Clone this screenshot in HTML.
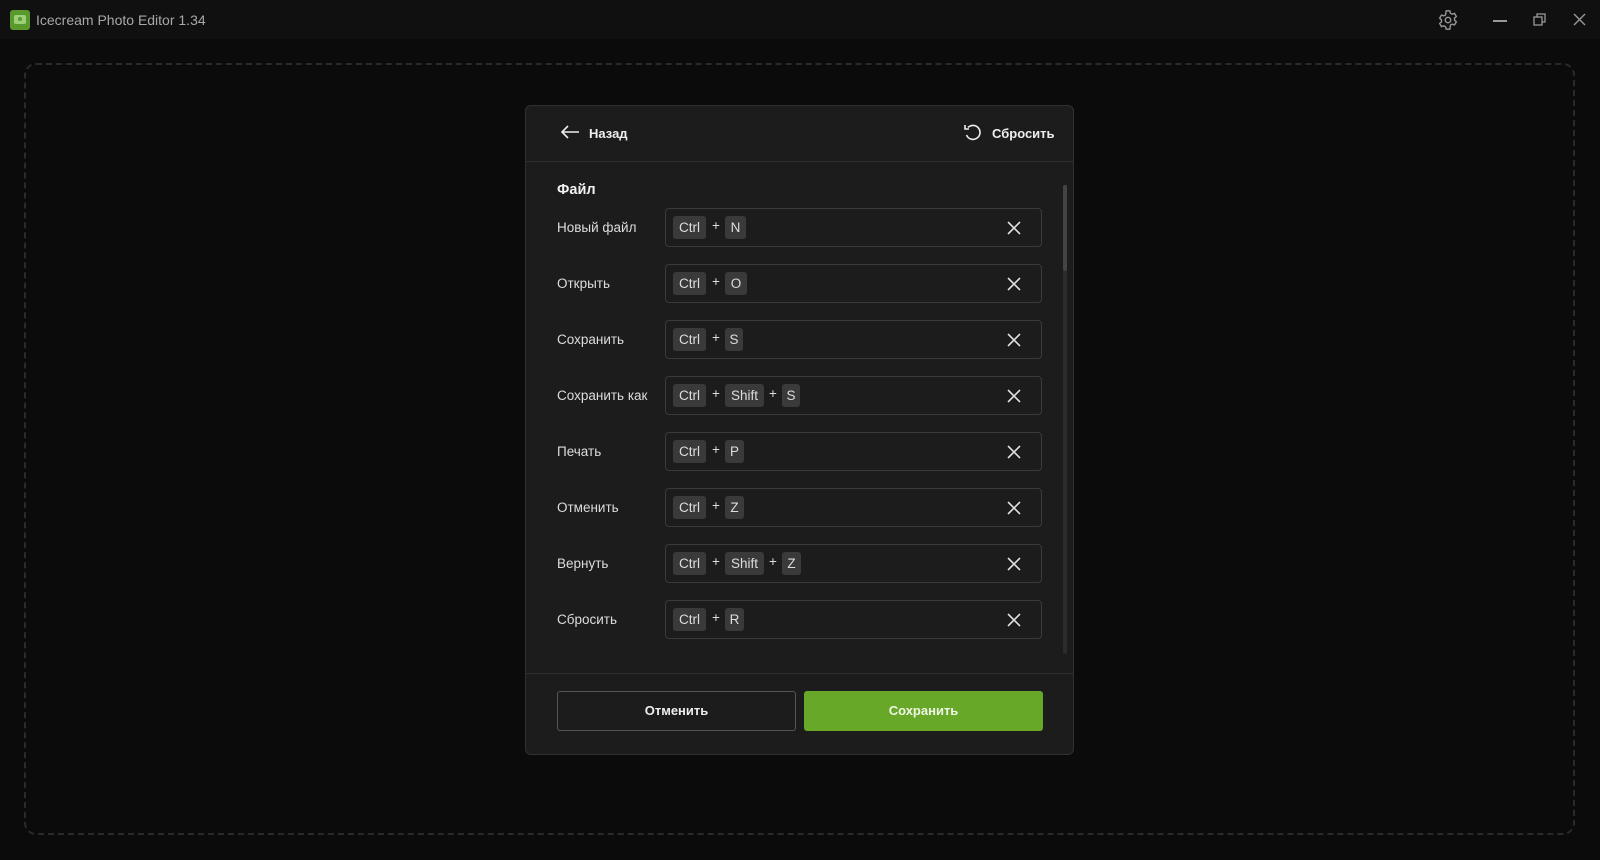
<!DOCTYPE html>
<html><head><meta charset="utf-8"><style>
*{box-sizing:border-box;margin:0;padding:0}
body{width:1600px;height:860px;background:#0b0b0b;font-family:"Liberation Sans",sans-serif;color:#e6e6e6;position:relative;overflow:hidden}
.title{position:absolute;left:0;top:0;width:1600px;height:39px;background:#101010}
.abs{position:absolute}
.dash{position:absolute;left:24px;top:63px;width:1551px;height:772px;border:2px dashed #2a2a2a;border-radius:12px}
.dlg{position:absolute;left:525px;top:105px;width:549px;height:650px;background:#1c1c1c;border:1px solid #303030;border-radius:6px}
.row{position:absolute;left:31px;width:490px;height:38px}
.row .lb{position:absolute;left:0;top:12px;font-size:13.5px;color:#ddd}
.inp{position:absolute;left:108px;top:0;width:377px;height:39px;border:1px solid #3a3a3a;border-radius:4px;background:#1c1c1c}
.k{position:absolute;top:7px;height:23px;background:#3a3a3a;border-radius:3px;font-size:13.5px;color:#ddd;line-height:23px;text-align:center}
.p{position:absolute;top:9px;font-size:13.5px;color:#ddd}
.x{position:absolute;right:20px;top:12px}
</style></head><body>
<div class="title">
<div class="abs" style="left:10px;top:10px;width:20px;height:20px;background:#5a9a2c;border-radius:3px"></div>
<div class="abs" style="left:14px;top:15px;width:12px;height:9px;background:#9ccf7a;border-radius:2px"></div>
<div class="abs" style="left:18px;top:17px;width:4px;height:4px;background:#5a9a2c;border-radius:50%"></div>
<div class="abs" style="left:36px;top:12px;font-size:14px;color:#a8a8a8">Icecream Photo Editor 1.34</div>
<svg class="abs" style="left:1437px;top:9px" width="22" height="22" viewBox="0 0 24 24" fill="none" stroke="#999" stroke-width="1.5"><circle cx="12" cy="12" r="3"/><path d="M10 2h4l.6 2.6 2 1.1 2.5-.9 2 3.4-2 1.8v2.2l2 1.8-2 3.4-2.5-.9-2 1.1L14 22h-4l-.6-2.6-2-1.1-2.5.9-2-3.4 2-1.8v-2.2l-2-1.8 2-3.4 2.5.9 2-1.1z"/></svg>
<div class="abs" style="left:1493px;top:20px;width:14px;height:1.5px;background:#999"></div>
<svg class="abs" style="left:1533px;top:13px" width="13" height="13" viewBox="0 0 13 13" fill="none" stroke="#999" stroke-width="1.3"><rect x="1" y="4" width="8" height="8"/><path d="M4 4V1h8v8H9"/></svg>
<svg class="abs" style="left:1573px;top:13px" width="13" height="13" viewBox="0 0 13 13" stroke="#999" stroke-width="1.4"><path d="M1 1l11 11M12 1L1 12"/></svg>
</div>
<div class="dash"></div>
<div class="dlg">
<svg class="abs" style="left:34px;top:18px" width="20" height="16" viewBox="0 0 20 16" fill="none" stroke="#eee" stroke-width="1.6"><path d="M19 8H2M8 2L2 8l6 6"/></svg>
<div class="abs" style="left:63px;top:20px;font-size:13px;font-weight:bold;color:#eee">Назад</div>
<svg class="abs" style="left:437px;top:17px" width="20" height="20" viewBox="0 0 20 20" fill="none" stroke="#eee" stroke-width="1.6"><path d="M5 4.5A7 7 0 1 1 3.5 12"/><path d="M2 2v4h4" /></svg>
<div class="abs" style="left:466px;top:20px;font-size:13px;font-weight:bold;color:#eee">Сбросить</div>
<div class="abs" style="left:0;top:55px;width:547px;height:1px;background:#2e2e2e"></div>
<div class="abs" style="left:31px;top:76px;font-size:14.5px;font-weight:bold;color:#f2f2f2">Файл</div>
<div class="abs" style="left:537px;top:79px;width:4px;height:469px;background:#2c2c2c;border-radius:2px"></div>
<div class="abs" style="left:537px;top:79px;width:4px;height:86px;background:#444;border-radius:2px"></div>

<div class="row" style="top:102px"><div class="lb">Новый файл</div><div class="inp"><div class="k" style="left:7px;width:33px">Ctrl</div><div class="p" style="left:46px">+</div><div class="k" style="left:59px;width:21px">N</div><svg class="x" width="14" height="14" stroke="#ddd" stroke-width="1.6"><path d="M1 1l12 12M13 1L1 13"/></svg></div></div>
<div class="row" style="top:158px"><div class="lb">Открыть</div><div class="inp"><div class="k" style="left:7px;width:33px">Ctrl</div><div class="p" style="left:46px">+</div><div class="k" style="left:59px;width:22px">O</div><svg class="x" width="14" height="14" stroke="#ddd" stroke-width="1.6"><path d="M1 1l12 12M13 1L1 13"/></svg></div></div>
<div class="row" style="top:214px"><div class="lb">Сохранить</div><div class="inp"><div class="k" style="left:7px;width:33px">Ctrl</div><div class="p" style="left:46px">+</div><div class="k" style="left:59px;width:18px">S</div><svg class="x" width="14" height="14" stroke="#ddd" stroke-width="1.6"><path d="M1 1l12 12M13 1L1 13"/></svg></div></div>
<div class="row" style="top:270px"><div class="lb">Сохранить как</div><div class="inp"><div class="k" style="left:7px;width:33px">Ctrl</div><div class="p" style="left:46px">+</div><div class="k" style="left:59px;width:39px">Shift</div><div class="p" style="left:103px">+</div><div class="k" style="left:116px;width:18px">S</div><svg class="x" width="14" height="14" stroke="#ddd" stroke-width="1.6"><path d="M1 1l12 12M13 1L1 13"/></svg></div></div>
<div class="row" style="top:326px"><div class="lb">Печать</div><div class="inp"><div class="k" style="left:7px;width:33px">Ctrl</div><div class="p" style="left:46px">+</div><div class="k" style="left:59px;width:19px">P</div><svg class="x" width="14" height="14" stroke="#ddd" stroke-width="1.6"><path d="M1 1l12 12M13 1L1 13"/></svg></div></div>
<div class="row" style="top:382px"><div class="lb">Отменить</div><div class="inp"><div class="k" style="left:7px;width:33px">Ctrl</div><div class="p" style="left:46px">+</div><div class="k" style="left:59px;width:19px">Z</div><svg class="x" width="14" height="14" stroke="#ddd" stroke-width="1.6"><path d="M1 1l12 12M13 1L1 13"/></svg></div></div>
<div class="row" style="top:438px"><div class="lb">Вернуть</div><div class="inp"><div class="k" style="left:7px;width:33px">Ctrl</div><div class="p" style="left:46px">+</div><div class="k" style="left:59px;width:39px">Shift</div><div class="p" style="left:103px">+</div><div class="k" style="left:116px;width:19px">Z</div><svg class="x" width="14" height="14" stroke="#ddd" stroke-width="1.6"><path d="M1 1l12 12M13 1L1 13"/></svg></div></div>
<div class="row" style="top:494px"><div class="lb">Сбросить</div><div class="inp"><div class="k" style="left:7px;width:33px">Ctrl</div><div class="p" style="left:46px">+</div><div class="k" style="left:59px;width:19px">R</div><svg class="x" width="14" height="14" stroke="#ddd" stroke-width="1.6"><path d="M1 1l12 12M13 1L1 13"/></svg></div></div>

<div class="abs" style="left:0;top:567px;width:547px;height:1px;background:#2e2e2e"></div>
<div class="abs" style="left:31px;top:585px;width:239px;height:40px;border:1px solid #555;border-radius:3px;font-size:13px;font-weight:bold;color:#eee;text-align:center;line-height:38px">Отменить</div>
<div class="abs" style="left:278px;top:585px;width:239px;height:40px;background:#67a828;border-radius:3px;font-size:13px;font-weight:bold;color:#eef6e6;text-align:center;line-height:40px">Сохранить</div>
</div>
</body></html>
